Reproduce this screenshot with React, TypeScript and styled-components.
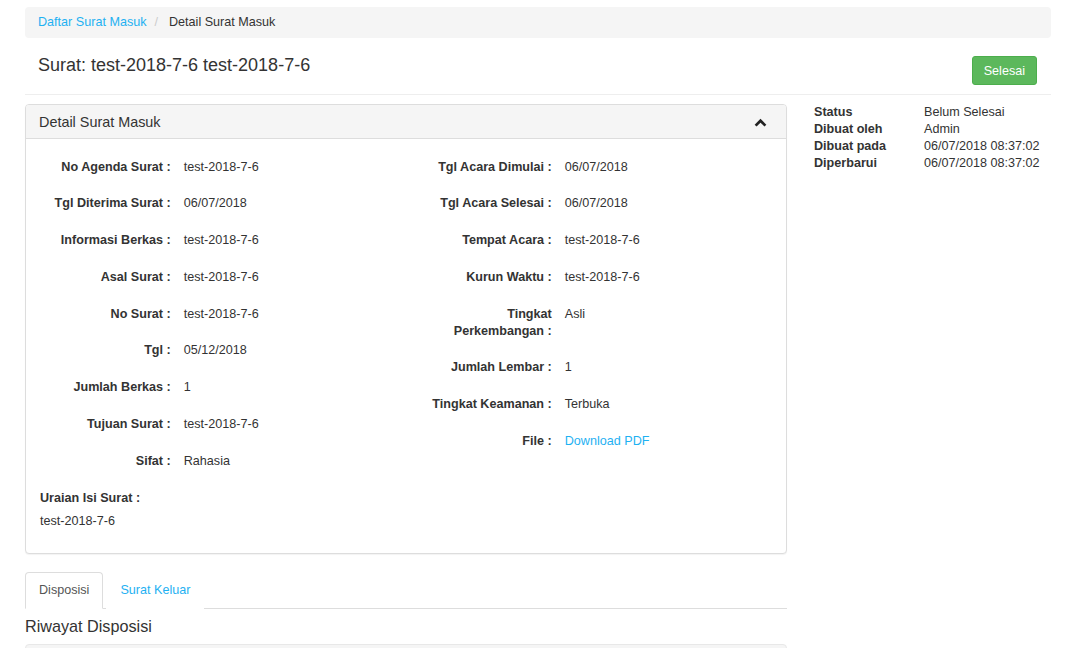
import React from "react"
import styled, { createGlobalStyle } from "styled-components"

const GlobalStyle = createGlobalStyle`
  html, body {
    margin: 0;
    padding: 0;
    overflow: hidden;
    background: #fff;
  }
  body {
    font-family: "Liberation Sans", Arial, Helvetica, sans-serif;
    font-size: 12.6px;
    line-height: 17px;
    color: #333;
  }
  * {
    box-sizing: border-box;
  }
`

const LINK = "#1fb1f2"

const Page = styled.div`
  padding: 7px 39px 0 25px;
`

const Breadcrumb = styled.div`
  display: flex;
  align-items: center;
  padding: 7px 13px;
  background: #f5f5f5;
  border-radius: 4px;
  height: 31px;
`

const Crumb = styled.span<{ $active?: boolean }>`
  color: ${p => (p.$active ? "#333" : LINK)};
`

const CrumbSeparator = styled.span`
  color: #ccc;
  padding: 0 11px 0 8px;
`

const PageHeader = styled.div`
  display: flex;
  justify-content: space-between;
  align-items: flex-start;
  margin-top: 17px;
  padding: 0 14px 9px 13px;
  border-bottom: 1px solid #eee;
`

const Title = styled.h3`
  margin: 0;
  font-size: 18px;
  line-height: 20px;
  font-weight: 400;
`

const Button = styled.button`
  margin-top: 1px;
  height: 29px;
  padding: 0 11px;
  font-family: inherit;
  font-size: 12.6px;
  color: #fff;
  background: #5cb85c;
  border: 1px solid #4cae4c;
  border-radius: 3px;
`

const Main = styled.div`
  display: grid;
  grid-template-columns: 762px 1fr;
  align-items: start;
  column-gap: 27px;
  padding-top: 9px;
`

const LeftCol = styled.div`
  display: flex;
  flex-direction: column;
`

const Panel = styled.div`
  border: 1px solid #ddd;
  border-radius: 4px;
  box-shadow: 0 1px 1px rgba(0, 0, 0, 0.05);
  background: #fff;
`

const PanelHeading = styled.div`
  display: flex;
  justify-content: space-between;
  align-items: center;
  padding: 8.5px 19px 7.5px 13px;
  background: #f5f5f5;
  border-bottom: 1px solid #ddd;
  border-radius: 3px 3px 0 0;
`

const PanelTitle = styled.div`
  font-size: 14.4px;
  line-height: 17px;
`

const PanelBody = styled.div`
  padding: 19.5px 14px 23.5px 14px;
`

const FieldColumns = styled.div`
  display: grid;
  grid-template-columns: 1fr 1fr;
  margin: 0 -15px;
`

const FieldList = styled.div`
  display: flex;
  flex-direction: column;
  row-gap: 19.75px;
`

const FieldRow = styled.div`
  display: grid;
  grid-template-columns: 5fr 7fr;
`

const Label = styled.div`
  padding: 0 13px 0 15px;
  text-align: right;
  font-weight: 700;
`

const Value = styled.div`
  padding-right: 15px;
`

const Link = styled.a`
  color: ${LINK};
  text-decoration: none;
`

const Uraian = styled.div`
  margin-top: 20px;
`

const UraianLabel = styled.div`
  font-weight: 700;
  margin-bottom: 6px;
`

const Tabs = styled.div`
  display: flex;
  margin-top: 18px;
  border-bottom: 1px solid #ddd;
`

const Tab = styled.div<{ $active?: boolean }>`
  margin-right: 3px;
  margin-bottom: -1px;
  padding: 9px 13px;
  border: 1px solid ${p => (p.$active ? "#ddd" : "transparent")};
  border-bottom-color: ${p => (p.$active ? "#fff" : "transparent")};
  border-radius: 4px 4px 0 0;
  background: #fff;
  color: ${p => (p.$active ? "#555" : LINK)};
`

const SectionTitle = styled.h4`
  margin: 8px 0 9px 0;
  font-size: 16.2px;
  line-height: 18px;
  font-weight: 400;
`

const GrayBox = styled.div`
  height: 40px;
  background: #f5f5f5;
  border: 1px solid #e8e8e8;
  border-radius: 4px;
`

const StatusList = styled.dl`
  display: grid;
  grid-template-columns: 110px 1fr;
  margin: 0;
`

const StatusTerm = styled.dt`
  font-weight: 700;
`

const StatusDesc = styled.dd`
  margin: 0;
`

const ChevronUp = () => (
  <svg width="13" height="9" viewBox="0 0 13 9">
    <polyline
      points="1.6,7.6 6.5,2.7 11.4,7.6"
      fill="none"
      stroke="#222"
      strokeWidth="2.7"
    />
  </svg>
)

const leftFields: [string, React.ReactNode][] = [
  ["No Agenda Surat :", "test-2018-7-6"],
  ["Tgl Diterima Surat :", "06/07/2018"],
  ["Informasi Berkas :", "test-2018-7-6"],
  ["Asal Surat :", "test-2018-7-6"],
  ["No Surat :", "test-2018-7-6"],
  ["Tgl :", "05/12/2018"],
  ["Jumlah Berkas :", "1"],
  ["Tujuan Surat :", "test-2018-7-6"],
  ["Sifat :", "Rahasia"],
]

const rightFields: [string, React.ReactNode][] = [
  ["Tgl Acara Dimulai :", "06/07/2018"],
  ["Tgl Acara Selesai :", "06/07/2018"],
  ["Tempat Acara :", "test-2018-7-6"],
  ["Kurun Waktu :", "test-2018-7-6"],
  ["Tingkat Perkembangan :", "Asli"],
  ["Jumlah Lembar :", "1"],
  ["Tingkat Keamanan :", "Terbuka"],
  ["File :", <Link href="#">Download PDF</Link>],
]

const status: [string, string][] = [
  ["Status", "Belum Selesai"],
  ["Dibuat oleh", "Admin"],
  ["Dibuat pada", "06/07/2018 08:37:02"],
  ["Diperbarui", "06/07/2018 08:37:02"],
]

const Fields = ({ items }: { items: [string, React.ReactNode][] }) => (
  <FieldList>
    {items.map(([label, value]) => (
      <FieldRow key={label}>
        <Label>{label}</Label>
        <Value>{value}</Value>
      </FieldRow>
    ))}
  </FieldList>
)

export default function App() {
  return (
    <Page>
      <GlobalStyle />
      <Breadcrumb>
        <Crumb>Daftar Surat Masuk</Crumb>
        <CrumbSeparator>/</CrumbSeparator>
        <Crumb $active>Detail Surat Masuk</Crumb>
      </Breadcrumb>

      <PageHeader>
        <Title>Surat: test-2018-7-6 test-2018-7-6</Title>
        <Button>Selesai</Button>
      </PageHeader>

      <Main>
        <LeftCol>
          <Panel>
            <PanelHeading>
              <PanelTitle>Detail Surat Masuk</PanelTitle>
              <ChevronUp />
            </PanelHeading>
            <PanelBody>
              <FieldColumns>
                <Fields items={leftFields} />
                <Fields items={rightFields} />
              </FieldColumns>
              <Uraian>
                <UraianLabel>Uraian Isi Surat :</UraianLabel>
                <div>test-2018-7-6</div>
              </Uraian>
            </PanelBody>
          </Panel>

          <Tabs>
            <Tab $active>Disposisi</Tab>
            <Tab>Surat Keluar</Tab>
          </Tabs>
          <SectionTitle>Riwayat Disposisi</SectionTitle>
          <GrayBox />
        </LeftCol>

        <StatusList>
          {status.map(([term, desc]) => (
            <React.Fragment key={term}>
              <StatusTerm>{term}</StatusTerm>
              <StatusDesc>{desc}</StatusDesc>
            </React.Fragment>
          ))}
        </StatusList>
      </Main>
    </Page>
  )
}
